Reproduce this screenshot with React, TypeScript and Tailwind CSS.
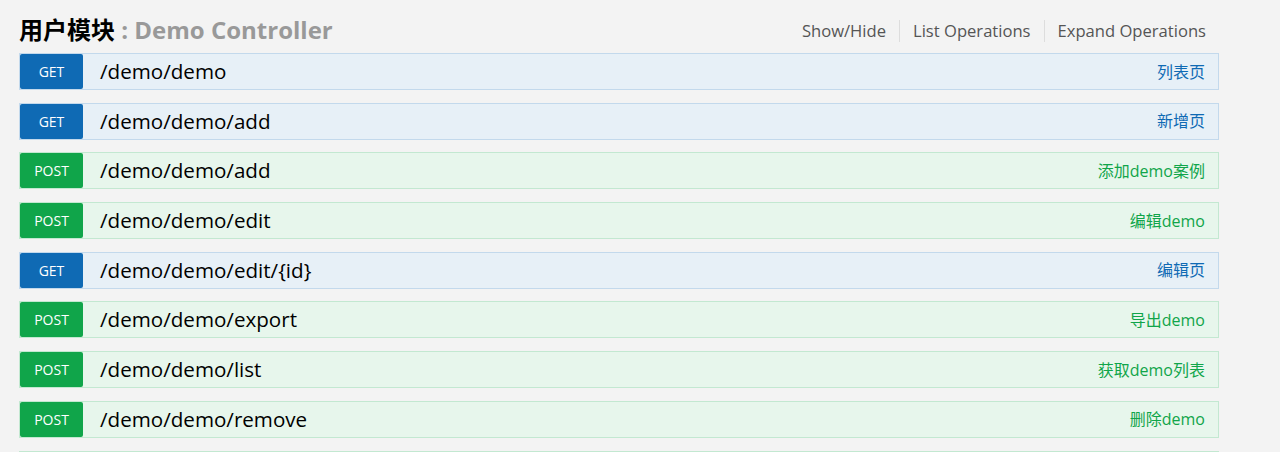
import React from "react";

type Op = { method: "GET" | "POST"; path: string; desc: string };

const ops: Op[] = [
  { method: "GET", path: "/demo/demo", desc: "列表页" },
  { method: "GET", path: "/demo/demo/add", desc: "新增页" },
  { method: "POST", path: "/demo/demo/add", desc: "添加demo案例" },
  { method: "POST", path: "/demo/demo/edit", desc: "编辑demo" },
  { method: "GET", path: "/demo/demo/edit/{id}", desc: "编辑页" },
  { method: "POST", path: "/demo/demo/export", desc: "导出demo" },
  { method: "POST", path: "/demo/demo/list", desc: "获取demo列表" },
  { method: "POST", path: "/demo/demo/remove", desc: "删除demo" },
  { method: "POST", path: "/demo/demo/save", desc: "保存demo" },
];

function Row({ op }: { op: Op }) {
  const get = op.method === "GET";
  return (
    <div
      className={
        get
          ? "flex items-center h-[37px] mb-[12.7px] border border-[#c3d9ec] bg-[#e7f0f7]"
          : "flex items-center h-[37px] mb-[12.7px] border border-[#c3e8d1] bg-[#e7f6ec]"
      }
    >
      <div
        className={
          get
            ? "w-[63px] h-[35px] flex items-center justify-center rounded-[2px] bg-[#0f6ab4] text-white text-[14px]"
            : "w-[63px] h-[35px] flex items-center justify-center rounded-[2px] bg-[#10a54a] text-white text-[14px]"
        }
      >
        {op.method}
      </div>
      <div className="ml-[17px] text-[20.6px] text-black">{op.path}</div>
      <div
        className={
          get
            ? "ml-auto mr-[13px] text-[16px] text-[#0f6ab4]"
            : "ml-auto mr-[13px] text-[16px] text-[#10a54a]"
        }
      >
        {op.desc}
      </div>
    </div>
  );
}

export default function App() {
  return (
    <div
      className="w-[1280px] h-[452px] overflow-hidden bg-[#f3f3f3]"
      style={{ fontFamily: '"Open Sans", "Noto Sans CJK SC", sans-serif' }}
    >
      <div className="w-[1200px] ml-[19px]">
        <div className="flex items-center h-[53px] pt-[13px] pb-[7px]">
          <div className="text-[24px] font-bold leading-none text-black">
            用户模块
            <span className="text-[#999999]"> : Demo Controller</span>
          </div>
          <div className="ml-auto mr-[13px] mt-[3px] flex items-center text-[16.6px] text-[#555555] leading-none">
            <span className="pr-[13px]">Show/Hide</span>
            <span className="h-[22px] w-px bg-[#dddddd]" />
            <span className="px-[13px]">List Operations</span>
            <span className="h-[22px] w-px bg-[#dddddd]" />
            <span className="pl-[13px]">Expand Operations</span>
          </div>
        </div>
        <div>
          {ops.map((op, i) => (
            <Row key={i} op={op} />
          ))}
        </div>
      </div>
    </div>
  );
}
